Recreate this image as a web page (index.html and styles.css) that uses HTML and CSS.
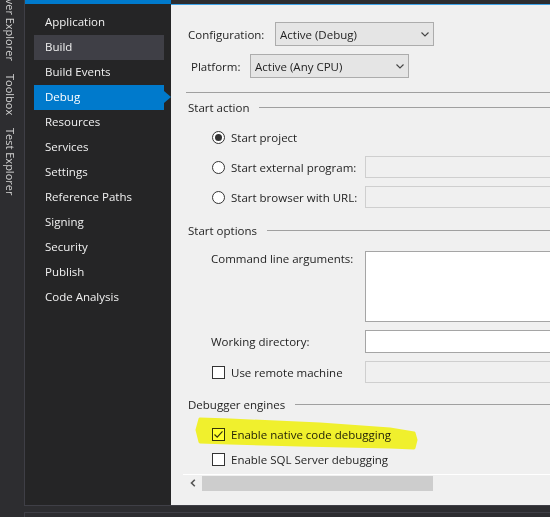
FILE: index.html
```html
<!DOCTYPE html>
<html>
<head>
<meta charset="utf-8">
<link rel="stylesheet" href="styles.css">
</head>
<body>
<div class="app">
  <div class="tabs">
    <span class="tab">Server Explorer</span>
    <span class="tab">Toolbox</span>
    <span class="tab">Test Explorer</span>
  </div>
  <div class="workspace">
    <div class="editor">
      <nav class="sidebar">
        <div class="sidebar-bar"></div>
        <ul class="nav">
          <li>Application</li>
          <li class="hover">Build</li>
          <li>Build Events</li>
          <li class="active">Debug</li>
          <li>Resources</li>
          <li>Services</li>
          <li>Settings</li>
          <li>Reference Paths</li>
          <li>Signing</li>
          <li>Security</li>
          <li>Publish</li>
          <li>Code Analysis</li>
        </ul>
      </nav>
      <main class="page">
        <div class="page-top"></div>
        <div class="row row-config">
          <span class="lbl">Configuration:</span>
          <div class="select"><span>Active (Debug)</span><svg class="chev" width="8" height="5" viewBox="0 0 8 5"><path d="M0.5 0.5 L4 4 L7.5 0.5" fill="none" stroke="#444" stroke-width="1.1"/></svg></div>
        </div>
        <div class="row row-platform">
          <span class="lbl">Platform:</span>
          <div class="select"><span>Active (Any CPU)</span><svg class="chev" width="8" height="5" viewBox="0 0 8 5"><path d="M0.5 0.5 L4 4 L7.5 0.5" fill="none" stroke="#444" stroke-width="1.1"/></svg></div>
        </div>
        <div class="rule"></div>

        <div class="group group-first">Start action</div>
        <div class="opt opt-first"><span class="radio on"></span><span class="text">Start project</span></div>
        <div class="opt"><span class="radio"></span><span class="text">Start external program:</span><span class="field"></span></div>
        <div class="opt"><span class="radio"></span><span class="text">Start browser with URL:</span><span class="field"></span></div>

        <div class="group group-options">Start options</div>
        <div class="opt opt-cmd"><span class="text wide">Command line arguments:</span><span class="field white area"></span></div>
        <div class="opt opt-wd"><span class="text wide">Working directory:</span><span class="field white"></span></div>
        <div class="opt opt-remote"><span class="check"></span><span class="text">Use remote machine</span><span class="field"></span></div>

        <div class="group group-engines">Debugger engines</div>
        <div class="chk chk-first"><span class="check"><svg width="11" height="11" viewBox="0 0 11 11"><path d="M1.5 5.5 L4.2 8.2 L9.5 2.3" fill="none" stroke="#333" stroke-width="1.2"/></svg></span><span>Enable native code debugging</span></div>
        <div class="chk"><span class="check"></span><span>Enable SQL Server debugging</span></div>

        <div class="hscroll">
          <svg class="arrow" width="6" height="8" viewBox="0 0 6 8"><path d="M4.8 0.8 L1.5 4 L4.8 7.2" fill="none" stroke="#555" stroke-width="1.6"/></svg>
          <span class="thumb"></span>
        </div>

        <svg class="marker" width="224" height="38" viewBox="0 0 224 38"><path d="M5 5 L35 6 L125 10 L195 15 L219 19 L221 26 L219 34 L195 33 L105 31 L35 29 L5 28 L2 16 Z" fill="#ffff30" stroke="#ffff30" stroke-width="3" stroke-linejoin="round"/></svg>
      </main>
    </div>
    <div class="bottom"></div>
  </div>
</div>
</body>
</html>
```
FILE: styles.css
```css
* { box-sizing: border-box; }
body {
  margin: 0;
  width: 550px;
  height: 517px;
  overflow: hidden;
  background: #2d2d30;
  font-family: "Open Sans", "Noto Sans", sans-serif;
  font-size: 11.5px;
}
.app { display: flex; height: 517px; }

.tabs {
  width: 24px;
  flex: none;
  writing-mode: vertical-rl;
  display: flex;
  gap: 1px;
  padding-right: 4px;
  line-height: 20px;
  font-size: 11px;
  color: #d0d0d0;
}
.tab { padding: 6px 0; white-space: nowrap; }
.tab:first-child { margin-top: -24px; }

.workspace { flex: 1; display: flex; flex-direction: column; min-width: 0; }
.editor {
  height: 506px;
  flex: none;
  display: flex;
  border-left: 1px solid #3f3f46;
  border-bottom: 1px solid #3f3f46;
}
.bottom {
  flex: 1;
  margin-top: 6px;
  border-top: 1px solid #3f3f46;
  border-left: 1px solid #3f3f46;
}

.sidebar { width: 146px; flex: none; background: #252526; }
.sidebar-bar { height: 4px; background: #007acc; }
.nav { list-style: none; margin: 6px 0 0 9px; padding: 0; width: 130px; }
.nav li {
  height: 25px;
  line-height: 24px;
  padding-left: 11px;
  color: #f1f1f1;
  position: relative;
}
.nav li.hover { background: #3f3f46; }
.nav li.active { background: #007acc; color: #fff; }
.nav li.active::after {
  content: "";
  position: absolute;
  left: 100%;
  top: 6px;
  border-left: 7px solid #007acc;
  border-top: 6px solid transparent;
  border-bottom: 6px solid transparent;
}

.page {
  flex: 1;
  min-width: 0;
  background: #f0f0f0;
  position: relative;
  overflow: hidden;
  display: flex;
  flex-direction: column;
  color: #1e1e1e;
}
.page-top { height: 5px; flex: none; background: #2d2d30; border-bottom: 1px solid #3ea3e8; }

.row { display: flex; align-items: center; flex: none; }
.row-config { margin-top: 17px; padding-left: 17px; }
.row-config .lbl { width: 87px; }
.row-platform { margin-top: 8px; padding-left: 20px; }
.row-platform .lbl { width: 59px; }
.select {
  width: 159px;
  height: 24px;
  background: #e5e5e5;
  border: 1px solid #acacac;
  display: flex;
  align-items: center;
  justify-content: space-between;
  padding: 0 4px 0 4px;
}

.rule { margin: 14px 0 0 15px; border-top: 1px solid #a0a0a0; flex: none; }

.group {
  display: flex;
  align-items: center;
  height: 16px;
  padding-left: 17px;
  flex: none;
}
.group::after {
  content: "";
  flex: 1;
  height: 1px;
  background: #a0a0a0;
  margin-left: 10px;
}
.group-first { margin-top: 6px; }
.group-options { margin-top: 14px; }
.group-engines { margin-top: 13px; }

.opt {
  display: flex;
  align-items: center;
  height: 22px;
  padding-left: 41px;
  margin-top: 8px;
  flex: none;
}
.opt-first { margin-top: 11px; }
.opt .text { width: 134px; flex: none; white-space: nowrap; }
.opt .text.wide { width: 154px; }
.opt-cmd { margin-top: 13px; height: 71px; align-items: flex-start; padding-left: 40px; line-height: 15px; }
.opt-wd { padding-left: 40px; height: 23px; }
.opt-remote { margin-top: 8px; }

.radio {
  width: 13px;
  height: 13px;
  border: 1px solid #333;
  border-radius: 50%;
  background: #fff;
  margin-right: 6px;
  display: flex;
  align-items: center;
  justify-content: center;
  flex: none;
}
.radio.on::before {
  content: "";
  width: 7px;
  height: 7px;
  border-radius: 50%;
  background: #333;
}
.check {
  width: 13px;
  height: 13px;
  border: 1px solid #333;
  background: #fff;
  margin-right: 6px;
  display: flex;
  align-items: center;
  justify-content: center;
  flex: none;
}
.field {
  width: 190px;
  height: 22px;
  flex: none;
  border: 1px solid #cfcfcf;
  background: #f0f0f0;
}
.field.white { background: #fff; border-color: #a5a5a5; height: 100%; }
.field.area { height: 71px; }

.chk {
  display: flex;
  align-items: center;
  height: 16px;
  padding-left: 41px;
  margin-top: 9px;
  flex: none;
}
.chk-first { margin-top: 14px; }

.hscroll {
  margin: 7px 0 0 12px;
  border-top: 1px solid #fff;
  height: 17px;
  display: flex;
  align-items: center;
  padding-left: 7px;
  flex: none;
}
.arrow { margin-right: 6px; }
.thumb { width: 231px; height: 15px; background: #cdcdcd; }

.marker {
  position: absolute;
  left: 24px;
  top: 414px;
  mix-blend-mode: multiply;
}
```
